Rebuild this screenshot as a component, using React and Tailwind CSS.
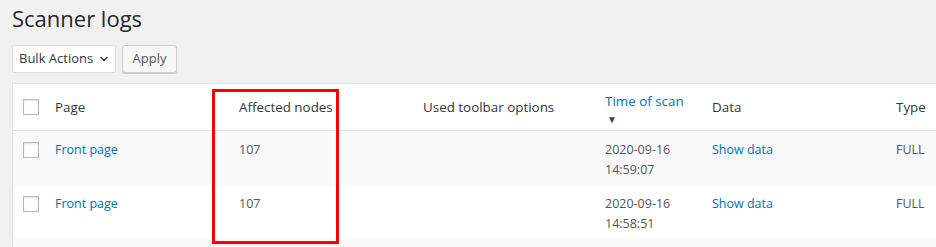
import { ChevronDown } from "lucide-react";

const rows = [
  { page: "Front page", nodes: "107", date: "2020-09-16", time: "14:59:07", type: "FULL" },
  { page: "Front page", nodes: "107", date: "2020-09-16", time: "14:58:51", type: "FULL" },
];

const cols = "grid grid-cols-[33px_184px_184px_182px_107px_184px_1fr]";

function Box() {
  return <span className="block w-4 h-4 border border-[#b4b9be] bg-white shadow-[inset_0_1px_2px_rgba(0,0,0,0.1)]" />;
}

export default function App() {
  return (
    <div className="relative w-[936px] h-[247px] overflow-hidden bg-[#f1f1f1] text-[#32373c] font-['Open_Sans','Noto_Sans',sans-serif]">
      <h1 className="pl-3 pt-[4px] text-[22px] leading-[29px] font-normal text-[#23282d]">Scanner logs</h1>

      {/* Bulk actions */}
      <div className="flex gap-[6px] pl-3 mt-[12px]">
        <div className="flex items-center justify-between w-[104px] h-[28px] pl-[6px] pr-[5px] bg-white border border-[#ddd] rounded-[2px] text-[13px] whitespace-nowrap">
          <span>Bulk Actions</span>
          <ChevronDown className="w-[12px] h-[12px]" strokeWidth={3} />
        </div>
        <button className="h-[28px] w-[55px] bg-[#f7f7f7] border border-[#ccc] rounded-[3px] shadow-[0_1px_0_#ccc] text-[13px] text-[#555]">
          Apply
        </button>
      </div>

      {/* Table */}
      <div className="ml-3 mt-[10px] bg-white border-t border-l border-[#e5e5e5]">
        <div className={`${cols} h-[47px] border-b border-[#e1e1e1] text-[13.4px] whitespace-nowrap`}>
          <div className="flex items-center pl-[10px]"><Box /></div>
          <div className="flex items-center pl-[9px]">Page</div>
          <div className="flex items-center pl-[9px]">Affected nodes</div>
          <div className="flex items-center pl-[9px]">Used toolbar options</div>
          <div className="pl-[9px] pt-[7px] text-[#0073aa] leading-[20px]">
            <div>Time of scan</div>
            <div className="pl-[2px] text-[10px] text-[#444] leading-[16px]">▼</div>
          </div>
          <div className="flex items-center pl-[9px]">Data</div>
          <div className="flex items-center pl-[9px]">Type</div>
        </div>
        {rows.map((r, i) => (
          <div key={i} className={`${cols} h-[54px] text-[12.5px] leading-[19.5px] text-[#555] ${i % 2 === 0 ? "bg-[#f9f9f9]" : "bg-white"}`}>
            <div className="pl-[10px] pt-[11px]"><Box /></div>
            <div className="pl-[9px] pt-[9px] text-[#0073aa]">{r.page}</div>
            <div className="pl-[9px] pt-[9px]">{r.nodes}</div>
            <div className="pl-[9px] pt-[9px]"></div>
            <div className="pl-[9px] pt-[9px]">
              <div>{r.date}</div>
              <div>{r.time}</div>
            </div>
            <div className="pl-[9px] pt-[9px] text-[#0073aa]">Show data</div>
            <div className="pl-[9px] pt-[9px]">{r.type}</div>
          </div>
        ))}
        <div className="h-[20px] bg-[#f9f9f9]" />
      </div>

      {/* annotation */}
      <div className="absolute left-[212px] top-[89px] w-[127px] h-[155px] border-[3px] border-[#ff0000]" />
    </div>
  );
}
